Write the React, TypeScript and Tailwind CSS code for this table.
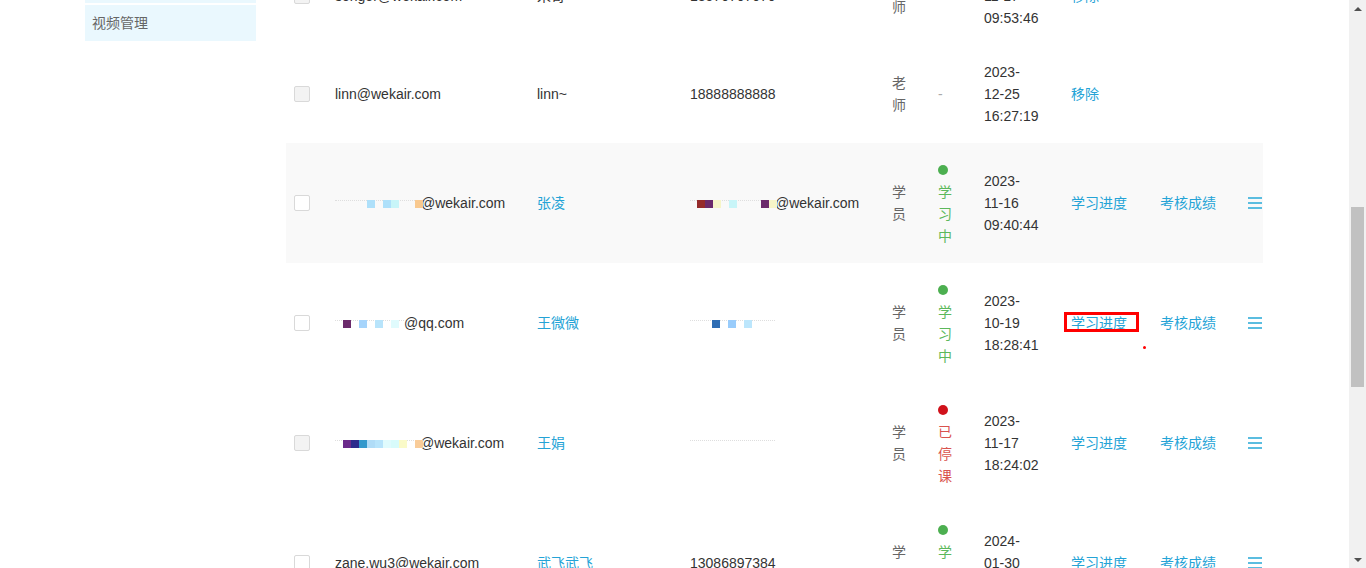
import React from "react";

const LINK = "text-[#24a3d6]";

type Cell = string | null;

function Mosaic({ width, cells, lead = 0 }: { width: number; cells: Cell[]; lead?: number }) {
  return (
    <span className="relative inline-block h-[8px] align-baseline" style={{ width }}>
      <span className="absolute left-0 top-0 h-0 w-full border-t border-dotted border-[#dedede]" />
      <span className="absolute left-0 top-0 flex h-[8px]" style={{ paddingLeft: lead }}>
        {cells.map((c, i) => (
          <span key={i} className="inline-block h-[8px] w-[8px]" style={{ background: c ?? "transparent" }} />
        ))}
      </span>
    </span>
  );
}

function Checkbox({ disabled }: { disabled?: boolean }) {
  return (
    <div
      className={
        "h-4 w-4 rounded-[2px] border border-[#d9d9d9] " + (disabled ? "bg-[#f3f3f3]" : "bg-white")
      }
    />
  );
}

function Lines({ items, className = "" }: { items: string[]; className?: string }) {
  return (
    <div className={"flex flex-col " + className}>
      {items.map((t, i) => (
        <div key={i} className="h-[22px] whitespace-nowrap">
          {t}
        </div>
      ))}
    </div>
  );
}

function MenuIcon() {
  return (
    <div className="flex w-[14px] flex-col gap-[3px]">
      <div className="h-[2px] w-[14px] bg-[#5bbde0]" />
      <div className="h-[2px] w-[14px] bg-[#5bbde0]" />
      <div className="h-[2px] w-[14px] bg-[#5bbde0]" />
    </div>
  );
}

type RowData = {
  cbDisabled?: boolean;
  email: React.ReactNode;
  name: string;
  nameLink?: boolean;
  phone: React.ReactNode;
  role: string[];
  status: "none" | "learning" | "stopped";
  date: string[];
  teacher?: boolean;
  hover?: boolean;
};

function Row({ r }: { r: RowData }) {
  return (
    <div className={"flex items-center py-4 " + (r.hover ? "bg-[#f9f9f9]" : "")}>
      <div className="w-[49px] shrink-0 pl-[8px]">
        <Checkbox disabled={r.cbDisabled} />
      </div>
      <div className="w-[202px] shrink-0 whitespace-nowrap text-[#333]">{r.email}</div>
      <div className={"w-[153px] shrink-0 " + (r.nameLink ? LINK : "text-[#333]")}>{r.name}</div>
      <div className="w-[202px] shrink-0 whitespace-nowrap text-[#333]">{r.phone}</div>
      <div className="w-[46px] shrink-0 text-[#666]">
        <Lines items={r.role} />
      </div>
      <div className="w-[46px] shrink-0">
        {r.status === "none" && <div className="text-[#aaa]">-</div>}
        {r.status === "learning" && (
          <div className="flex flex-col">
            <div className="flex h-[22px] items-center">
              <div className="h-[10px] w-[10px] rounded-full bg-[#4caf50]" />
            </div>
            <Lines items={["学", "习", "中"]} className="text-[#5cb85c]" />
          </div>
        )}
        {r.status === "stopped" && (
          <div className="flex flex-col">
            <div className="flex h-[22px] items-center">
              <div className="h-[10px] w-[10px] rounded-full bg-[#d0121b]" />
            </div>
            <Lines items={["已", "停", "课"]} className="text-[#d9534f]" />
          </div>
        )}
      </div>
      <div className="w-[87px] shrink-0 text-[#333]">
        <Lines items={r.date} />
      </div>
      {r.teacher ? (
        <div className={"w-[192px] shrink-0 " + LINK}>移除</div>
      ) : (
        <>
          <div className={"w-[89px] shrink-0 " + LINK}>学习进度</div>
          <div className={"w-[88px] shrink-0 " + LINK}>考核成绩</div>
          <div className="w-[15px] shrink-0">
            <MenuIcon />
          </div>
        </>
      )}
    </div>
  );
}

const F: Cell = null;

const rows: RowData[] = [
  {
    cbDisabled: true,
    email: "songer@wekair.com",
    name: "宋哥",
    phone: "13570707070",
    role: ["老", "师"],
    status: "none",
    date: ["2023-", "11-17", "09:53:46"],
    teacher: true,
  },
  {
    cbDisabled: true,
    email: "linn@wekair.com",
    name: "linn~",
    phone: "18888888888",
    role: ["老", "师"],
    status: "none",
    date: ["2023-", "12-25", "16:27:19"],
    teacher: true,
  },
  {
    hover: true,
    email: (
      <>
        <Mosaic width={86} cells={[F, F, F, F, "#aee0fa", F, "#aee0fa", "#c8f5f8", F, F, "#f9c98f"]} />
        @wekair.com
      </>
    ),
    name: "张凌",
    nameLink: true,
    phone: (
      <>
        <Mosaic
          width={85}
          lead={7}
          cells={["#952b2b", "#6b2a6b", "#f7f5c8", F, "#c8f5f8", F, F, F, "#6b2a6b", "#f7f5c8"]}
        />
        @wekair.com
      </>
    ),
    role: ["学", "员"],
    status: "learning",
    date: ["2023-", "11-16", "09:40:44"],
  },
  {
    email: (
      <>
        <Mosaic width={69} cells={[F, "#6b2a6b", F, "#a6d4fb", F, "#b8e4fb", F, "#e0fbfd", F]} />
        @qq.com
      </>
    ),
    name: "王微微",
    nameLink: true,
    phone: <Mosaic width={85} lead={6} cells={[F, F, "#2e6db4", F, "#99ccfb", F, "#bce6fc", F, F, F]} />,
    role: ["学", "员"],
    status: "learning",
    date: ["2023-", "10-19", "18:28:41"],
  },
  {
    cbDisabled: true,
    email: (
      <>
        <Mosaic
          width={85}
          cells={[F, "#6b2a8b", "#2c2a8c", "#3399cc", "#b0dcf7", "#b8e4fb", "#e0fbfd", "#d8fbfb", "#fafac8", F, "#f9cc99"]}
        />
        @wekair.com
      </>
    ),
    name: "王娟",
    nameLink: true,
    phone: <Mosaic width={85} cells={[]} />,
    role: ["学", "员"],
    status: "stopped",
    date: ["2023-", "11-17", "18:24:02"],
  },
  {
    email: "zane.wu3@wekair.com",
    name: "武飞武飞",
    nameLink: true,
    phone: "13086897384",
    role: ["学", "员"],
    status: "learning",
    date: ["2024-", "01-30", "10:12:33"],
  },
];

function Scrollbar() {
  return (
    <div className="flex w-[17px] shrink-0 flex-col bg-[#f1f1f1]">
      <div className="flex h-[17px] items-center justify-center">
        <div className="h-0 w-0 border-x-[4px] border-b-[4px] border-x-transparent border-b-[#505050]" />
      </div>
      <div className="flex-1 px-[2px] pt-[190px]">
        <div className="h-[180px] bg-[#c1c1c1]" />
      </div>
      <div className="flex h-[17px] items-center justify-center">
        <div className="h-0 w-0 border-x-[4px] border-t-[4px] border-x-transparent border-t-[#505050]" />
      </div>
    </div>
  );
}

export default function App() {
  return (
    <div className="relative flex h-[568px] w-[1366px] overflow-hidden bg-white font-['Liberation_Sans','Noto_Sans_CJK_SC',sans-serif] text-[14px] leading-[22px]">
      <div className="flex-1 overflow-hidden">
        <div className="-mt-[53px] flex pl-[85px]">
          <aside className="flex w-[171px] shrink-0 flex-col gap-[2px] pt-[20px]">
            <div className="flex h-[36px] items-center bg-[#eaf8fe] pl-[7px] text-[#666]">课程管理</div>
            <div className="flex h-[36px] items-center bg-[#eaf8fe] pl-[7px] text-[#666]">视频管理</div>
          </aside>
          <div className="ml-[30px] w-[977px] shrink-0">
            {rows.map((r, i) => (
              <Row key={i} r={r} />
            ))}
          </div>
        </div>
      </div>
      <Scrollbar />
      <div className="absolute left-[1064px] top-[312px] h-[20px] w-[75px] border-[3px] border-[#ff0000]" />
      <div className="absolute left-[1143px] top-[346px] h-[3px] w-[3px] rounded-full bg-[#ff0000]" />
    </div>
  );
}
